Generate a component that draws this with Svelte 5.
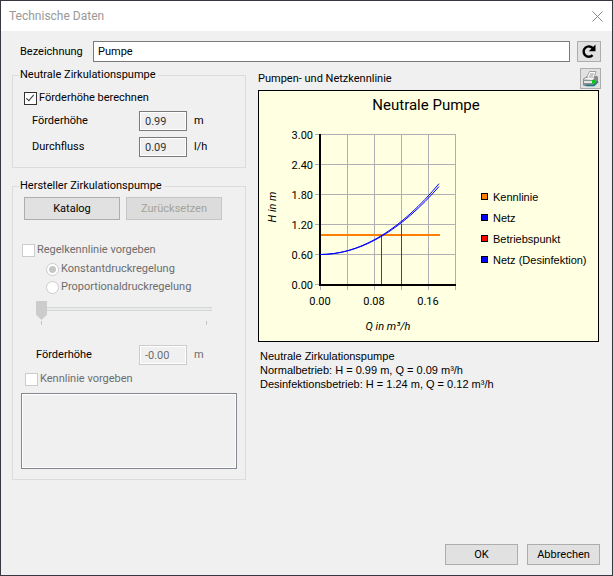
<script lang="ts">
	type Series = { name: string; color: string };

	const series: Series[] = [
		{ name: 'Kennlinie', color: '#ff8000' },
		{ name: 'Netz', color: '#0000ff' },
		{ name: 'Betriebspunkt', color: '#ff0000' },
		{ name: 'Netz (Desinfektion)', color: '#0000ff' }
	];

	const rows = ['3.00', '2.40', '1.80', '1.20', '0.60', '0.00'];
	const columns = ['0.00', '', '0.08', '', '0.16', ''];

	const origin = { x: 62, y: 164.5 };

	// quadratic network curve, starting at 0.60 m
	function curve(factor: number) {
		let points = '';
		for (let q = 0; q <= 119; q += 7) {
			points += `${origin.x + q},${origin.y - factor * q * q} `;
		}
		return points;
	}

	let name = $state('Pumpe');
	let calculate = $state(true);
</script>

<svelte:head>
	<title>Technische Daten</title>
</svelte:head>

<div class="dialog">
	<header>
		<h1>Technische Daten</h1>
		<button class="close" type="button" aria-label="Schließen">
			<svg width="11" height="11" viewBox="0 0 11 11">
				<path d="M0.5 0.5l10 10M10.5 0.5l-10 10" stroke="#858585" fill="none" />
			</svg>
		</button>
	</header>

	<main>
		<div class="name-row">
			<label for="name">Bezeichnung</label>
			<input id="name" class="name" type="text" bind:value={name} />
			<button class="icon reload" type="button" aria-label="Aktualisieren">
				<svg width="18" height="17" viewBox="0 0 18 17">
					<path d="M12.6 12.2A5.2 5.2 0 1 1 13 5.5" stroke="#000" stroke-width="2.4" fill="none" />
					<path d="M15.5 1.5v6.7H8.8z" fill="#000" />
				</svg>
			</button>
		</div>

		<div class="columns">
			<div class="left">
				<fieldset class="neutral">
					<legend>Neutrale Zirkulationspumpe</legend>
					<label class="check">
						<input type="checkbox" bind:checked={calculate} />
						Förderhöhe berechnen
					</label>
					<div class="field">
						<label for="head">Förderhöhe</label>
						<input id="head" type="text" value="0.99" readonly />
						<span>m</span>
					</div>
					<div class="field">
						<label for="flow">Durchfluss</label>
						<input id="flow" type="text" value="0.09" readonly />
						<span>l/h</span>
					</div>
				</fieldset>

				<fieldset class="maker">
					<legend>Hersteller Zirkulationspumpe</legend>
					<div class="buttons">
						<button type="button">Katalog</button>
						<button type="button" disabled>Zurücksetzen</button>
					</div>
					<label class="check off">
						<input type="checkbox" disabled />
						Regelkennlinie vorgeben
					</label>
					<div class="radios">
						<label class="check off">
							<input type="radio" name="control" checked disabled />
							Konstantdruckregelung
						</label>
						<label class="check off">
							<input type="radio" name="control" disabled />
							Proportionaldruckregelung
						</label>
					</div>
					<div class="slider">
						<input type="range" min="0" max="100" value="0" aria-label="Regelung" disabled />
						<div class="ticks"><i></i><i></i></div>
					</div>
					<div class="field">
						<label for="maker-head">Förderhöhe</label>
						<input id="maker-head" type="text" value="-0.00" disabled />
						<span class="off">m</span>
					</div>
					<label class="check off curve-check">
						<input type="checkbox" disabled />
						Kennlinie vorgeben
					</label>
					<textarea aria-label="Kennlinie" disabled></textarea>
				</fieldset>
			</div>

			<section class="right">
				<div class="chart-head">
					<h2>Pumpen- und Netzkennlinie</h2>
					<button class="icon print" type="button" aria-label="Drucken">
						<svg width="17" height="17" viewBox="0 0 17 17">
							<path d="M1 9l4-3h10l1 1v5l-4 4H2l-1-1z" fill="#85898c" />
							<path d="M4.5 8l3-6.500H14L12 8z" fill="#fff" stroke="#8c8c8c" stroke-width="0.800" />
							<path d="M8 4h4M7 6h4" stroke="#909090" />
							<path d="M1.500 9.500l2-1.500h9l-2 2z" fill="#f4f4f4" />
							<path d="M2 10.500h8v3H2z" fill="#e2e6e6" />
							<path d="M1 10.500h9M2 13.500h8" stroke="#8c9294" />
							<path d="M4 15.500h8l4-4" stroke="#18797d" fill="none" stroke-width="1.600" />
							<path d="M10 10h3.500v3.500H10z" fill="#08c818" />
						</svg>
					</button>
				</div>

				<div class="plot">
					<svg class="chart" viewBox="0 0 339 250" role="img" aria-label="Neutrale Pumpe">
						<g transform="translate(-1 -1)">
							<text class="title" x="168" y="20">Neutrale Pumpe</text>

							<g stroke="#b0b0b4">
								{#each rows as row, i}
									<path d="M57 {44.5 + i * 30}H198" />
								{/each}
								{#each columns as column, i}
									<path d="M{62.5 + i * 27} 44V200" />
								{/each}
							</g>
							<path d="M62 44V196M61 195H198" stroke="#000" stroke-width="2" />

							{#each rows as row, i}
								<text class="row" x="55" y={49 + i * 30}>{row}</text>
							{/each}
							{#each columns as column, i}
								<text class="column" x={62 + i * 27} y="215">{column}</text>
							{/each}
							<text class="axis" x="130" y="240">Q in m³/h</text>
							<text class="axis" transform="translate(18 117) rotate(-90)">H in m</text>

							<path d="M63 145H182" stroke="#ff8000" stroke-width="2" />
							<path d="M123.5 146V194M143.5 134V194" stroke="#f00000" />
							<polyline points={curve(0.005)} />
							<polyline points={curve(0.0048)} />

							{#each series as entry, i}
								<rect x="223.5" y={103.5 + i * 21} width="6" height="6" fill={entry.color} stroke="#000" />
								<text class="entry" x="235" y={111 + i * 21}>{entry.name}</text>
							{/each}
						</g>
					</svg>

					<p>
						Neutrale Zirkulationspumpe<br />
						Normalbetrieb: H = 0.99 m, Q = 0.09 m³/h<br />
						Desinfektionsbetrieb: H = 1.24 m, Q = 0.12 m³/h
					</p>
				</div>
			</section>
		</div>
	</main>

	<footer>
		<button type="button">OK</button>
		<button type="button">Abbrechen</button>
	</footer>
</div>

<style>
	.dialog {
		min-height: 100vh;
		box-sizing: border-box;
		display: flex;
		flex-direction: column;
		border: 1px solid #383840;
		background: #f0f0f0;
		color: #000;
		font-family: Tahoma, Roboto, sans-serif;
		font-size: 11px;
		line-height: 14px;
	}

	header {
		display: flex;
		align-items: center;
		justify-content: space-between;
		height: 30px;
		padding: 0 9px 0 8px;
		background: #fff;
	}

	h1 {
		margin: 0;
		font-family: 'Segoe UI', Roboto, sans-serif;
		font-size: 12px;
		font-weight: normal;
		color: #999;
	}

	h2 {
		margin: 0;
		font-size: 11px;
		font-weight: normal;
	}

	button,
	input,
	textarea {
		box-sizing: border-box;
		margin: 0;
		font: inherit;
		color: inherit;
	}

	button {
		padding: 0;
		border: 1px solid #adadad;
		background: #e1e1e1;
	}

	button:disabled {
		border-color: #c6c6c6;
		background: #dcdcdc;
		color: #a3a398;
	}

	.close {
		display: flex;
		border: 0;
		background: none;
	}

	.icon {
		display: flex;
		align-items: center;
		justify-content: center;
		height: 21px;
	}

	.reload {
		width: 24px;
	}

	.print {
		width: 21px;
	}

	main {
		padding: 10px 11px 0;
	}

	.name-row {
		display: flex;
		align-items: center;
		padding-left: 8px;
		margin-bottom: 6px;
	}

	.name-row label {
		width: 73px;
	}

	.name {
		flex: 1;
		min-width: 0;
		height: 21px;
		margin-right: 7px;
		padding: 0 4px;
		border: 1px solid #7a7a7a;
		background: #fff;
	}

	.columns {
		display: grid;
		grid-template-columns: 234px 1fr;
		gap: 12px;
	}

	.left {
		display: flex;
		flex-direction: column;
		gap: 11px;
	}

	fieldset {
		min-width: 0;
		margin: 0;
		border: 1px solid #dcdcdc;
	}

	.neutral {
		padding: 9px 11px 10px;
	}

	.maker {
		padding: 4px 8px 10px;
	}

	legend {
		margin-left: -5px;
		padding: 0 2px 0 1px;
	}

	.maker legend {
		margin-left: -2px;
	}

	.check {
		display: flex;
		align-items: center;
		gap: 2px;
	}

	.check input {
		appearance: none;
		position: relative;
		flex: none;
		width: 13px;
		height: 13px;
		border: 1px solid #333;
		background: #fff;
	}

	.check input[type='checkbox']:checked::after {
		content: '';
		position: absolute;
		left: 3px;
		top: 0;
		width: 3px;
		height: 7px;
		border: solid #333;
		border-width: 0 1px 1px 0;
		transform: rotate(40deg);
	}

	.check input[type='radio'] {
		border-radius: 50%;
	}

	.check input:disabled {
		border-color: #ccc;
	}

	.check input[type='radio']:checked {
		background: radial-gradient(circle, #c6c6c6 3px, #fff 4px);
	}

	.off {
		color: #6d6d6d;
	}

	.field {
		display: flex;
		align-items: center;
		margin-top: 6px;
		padding-left: 8px;
	}

	.field label {
		width: 107px;
	}

	.field input {
		width: 48px;
		height: 20px;
		margin-right: 7px;
		padding: 0 5px;
		border: 1px solid #7a7a7a;
		background: #f0f0f0;
		box-shadow: inset 0 0 0 1px #fff;
		color: #333;
	}

	.field input:disabled {
		border-color: #ccc;
		color: #6d6d6d;
	}

	.buttons {
		display: flex;
		gap: 6px;
		margin: 0 3px 23px;
	}

	.buttons button {
		width: 96px;
		height: 23px;
	}

	.maker > .check {
		padding-left: 1px;
	}

	.radios {
		display: flex;
		flex-direction: column;
		gap: 4px;
		margin: 5px 0 7px 25px;
	}

	.slider {
		width: 176px;
		margin: 0 0 20px 15px;
	}

	.slider input {
		appearance: none;
		display: block;
		width: 100%;
		height: 19px;
		background: linear-gradient(#d6d6d6 1px, #e7eaea 1px 3px, #d6d6d6 3px) 0 6px / 100% 4px no-repeat;
	}

	.slider input::-webkit-slider-thumb {
		appearance: none;
		width: 11px;
		height: 19px;
		background: #ccc;
		clip-path: polygon(0 0, 100% 0, 100% 72%, 50% 100%, 0 72%);
	}

	.ticks {
		display: flex;
		justify-content: space-between;
		padding: 1px 5px 0;
	}

	.ticks i {
		width: 1px;
		height: 4px;
		background: #c4c4c4;
	}

	.maker .field {
		padding-left: 15px;
	}

	.maker .field label {
		width: 103px;
	}

	.maker .curve-check {
		margin: 7px 0;
		padding-left: 4px;
	}

	textarea {
		display: block;
		width: 100%;
		height: 76px;
		border: 1px solid #828790;
		background: #f0f0f0;
		box-shadow: inset 0 0 0 1px #fff;
		resize: none;
	}

	.chart-head {
		display: flex;
		align-items: center;
		justify-content: space-between;
		margin-bottom: 1px;
	}

	.plot {
		padding-right: 2px;
	}

	.chart {
		display: block;
		box-sizing: border-box;
		width: 100%;
		border: 1px solid #000;
		background: #ffffe1;
	}

	.chart text {
		font-size: 11px;
	}

	.chart .title {
		font-size: 15px;
		text-anchor: middle;
	}

	.chart .row {
		text-anchor: end;
	}

	.chart .column {
		text-anchor: middle;
	}

	.chart .axis {
		font-style: italic;
		text-anchor: middle;
	}

	.chart .entry,
	p {
		font-family: Arial, 'Liberation Sans', sans-serif;
	}

	.chart polyline {
		fill: none;
		stroke: #0000ff;
	}

	p {
		margin: 7px 0 0 2px;
	}

	footer {
		display: flex;
		justify-content: flex-end;
		gap: 9px;
		margin-top: auto;
		padding: 10px 12px;
	}

	footer button {
		width: 73px;
		height: 21px;
	}

	:global(body) {
		margin: 0;
	}
</style>
